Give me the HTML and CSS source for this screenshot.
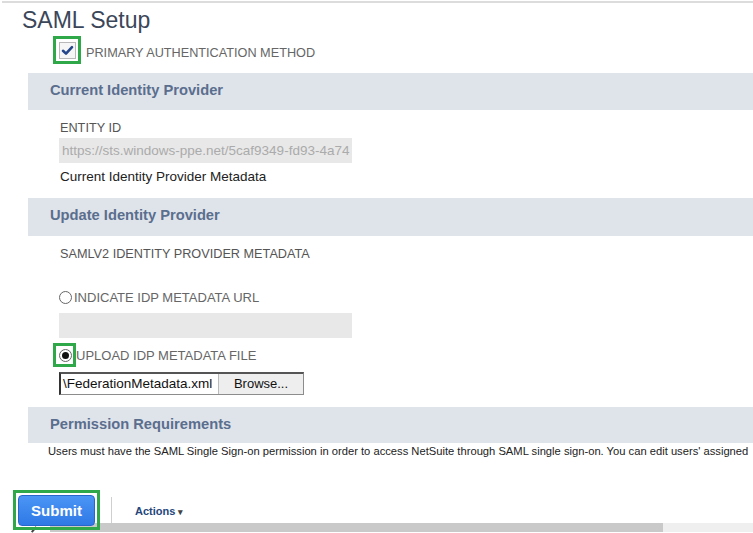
FILE: index.html
```html
<!DOCTYPE html>
<html>
<head>
<meta charset="utf-8">
<link rel="stylesheet" href="styles.css">
</head>
<body>
<div class="page">
  <div class="topline"></div>
  <h1 class="title">SAML Setup</h1>
  <div class="check-row">
    <span class="mark-wrap">
      <span class="checkbox">
        <svg width="13" height="11" viewBox="0 0 13 11"><path d="M2 5.8 L5 8.6 L11 2.2" fill="none" stroke="#24468a" stroke-width="2.6" stroke-linecap="round" stroke-linejoin="round"/></svg>
      </span>
      <span class="hl hl-check"></span>
    </span>
    <span class="check-label">PRIMARY AUTHENTICATION METHOD</span>
  </div>

  <div class="band band-1">Current Identity Provider</div>
  <div class="field">
    <div class="label row-entity">ENTITY ID</div>
    <div class="input ro">https://sts.windows-ppe.net/5caf9349-fd93-4a74</div>
    <div class="plain row-meta">Current Identity Provider Metadata</div>
  </div>

  <div class="band band-2">Update Identity Provider</div>
  <div class="field">
    <div class="label row-saml">SAMLV2 IDENTITY PROVIDER METADATA</div>
    <div class="radio-row row-url">
      <span class="radio"></span>
      <span class="label">INDICATE IDP METADATA URL</span>
    </div>
    <div class="input"></div>
    <div class="radio-row row-upload">
      <span class="mark-wrap">
        <span class="radio on"></span>
        <span class="hl hl-radio"></span>
      </span>
      <span class="label">UPLOAD IDP METADATA FILE</span>
    </div>
    <div class="file">
      <span class="file-name"><span class="file-text">\FederationMetadata.xml</span></span>
      <span class="browse">Browse...</span>
    </div>
  </div>

  <div class="band band-3">Permission Requirements</div>
  <div class="perm">Users must have the SAML Single Sign-on permission in order to access NetSuite through SAML single sign-on. You can edit users' assigned</div>

  <div class="footer">
    <span class="submit">Submit<span class="hl hl-submit"></span></span>
    <span class="sep"></span>
    <span class="actions">Actions <span class="caret">&#9662;</span></span>
  </div>
  <div class="bottom-bar">
    <span class="bb-left"><span class="tick"></span></span>
    <span class="bb-mid"></span>
    <span class="bb-right"></span>
  </div>
</div>
</body>
</html>
```

FILE: styles.css
```css
html, body {
  margin: 0;
  padding: 0;
  background: #ffffff;
}
body {
  font-family: "Liberation Sans", Arial, sans-serif;
  width: 753px;
  height: 533px;
  overflow: hidden;
}
.page {
  width: 753px;
}
.topline {
  height: 2px;
  margin-top: 1px;
  margin-left: 2px;
  background: #dcdcdc;
}
.title {
  margin: 4px 0 0 22px;
  font-weight: normal;
  font-size: 23px;
  line-height: 26px;
  height: 26px;
  color: #3b4759;
}
.check-row {
  display: flex;
  align-items: center;
  height: 26px;
  margin-top: 4px;
  padding-left: 59px;
}
.mark-wrap {
  position: relative;
  display: inline-flex;
}
.checkbox {
  width: 15px;
  height: 15px;
  border: 1px solid #b9b9b9;
  background: #f6f6f6;
  display: inline-flex;
  align-items: center;
  justify-content: center;
}
.hl {
  position: absolute;
  border: 3px solid #2fa84a;
  box-sizing: border-box;
  pointer-events: none;
}
.hl-check {
  left: -6px;
  top: -6px;
  width: 28px;
  height: 28px;
}
.check-label {
  margin-left: 10px;
  padding-top: 5px;
  font-size: 12.7px;
  color: #666666;
}
.band {
  margin-left: 28px;
  height: 37px;
  line-height: 35px;
  padding-left: 22px;
  background: #dfe3ea;
  font-size: 14.7px;
  font-weight: bold;
  color: #5a6e8e;
}
.band-1 {
  margin-top: 10px;
}
.band-2 {
  margin-top: 11px;
  height: 38px;
  line-height: 35px;
}
.band-3 {
  margin-top: 12px;
  height: 36px;
  line-height: 35px;
}
.field {
  padding-left: 59px;
}
.label {
  font-size: 12.7px;
  color: #555555;
}
.row-entity {
  margin-top: 8px;
  height: 20px;
  line-height: 20px;
  padding-left: 1px;
}
.input {
  width: 293px;
  height: 25px;
  line-height: 25px;
  background: #e8e8e8;
  font-size: 13.5px;
  color: #ababab;
  padding-left: 3px;
  box-sizing: border-box;
  white-space: nowrap;
  overflow: hidden;
}
.plain {
  font-size: 13.5px;
  color: #222222;
}
.row-meta {
  margin-top: 4px;
  height: 20px;
  line-height: 20px;
  padding-left: 1px;
}
.row-saml {
  margin-top: 8px;
  height: 20px;
  line-height: 20px;
  padding-left: 1px;
}
.radio-row {
  display: flex;
  align-items: center;
  height: 20px;
}
.row-url {
  margin-top: 23px;
  margin-bottom: 6px;
}
.row-url .label,
.row-upload .label {
  margin-left: 2px;
  font-size: 13px;
  color: #666666;
}
.radio {
  width: 11px;
  height: 11px;
  border: 1px solid #666666;
  border-radius: 50%;
  background: #ffffff;
  display: inline-flex;
  align-items: center;
  justify-content: center;
}
.radio.on::after {
  content: "";
  width: 7px;
  height: 7px;
  border-radius: 50%;
  background: #111111;
}
.row-upload {
  margin-top: 6px;
  height: 22px;
}
.row-upload .label {
  margin-left: 4px;
}
.hl-radio {
  left: -6px;
  top: -6px;
  width: 23px;
  height: 24px;
}
.file {
  margin-top: 6px;
  display: flex;
  width: 245px;
  height: 23px;
  box-sizing: border-box;
  border: 1px solid #8c8c8c;
  border-left: 2px solid #333333;
  border-top: 2px solid #555555;
}
.file-name {
  width: 157px;
  white-space: nowrap;
  display: flex;
  align-items: center;
  background: #ffffff;
  padding-left: 2px;
  box-sizing: border-box;
}
.file-text {
  font-size: 13.5px;
  line-height: 20px;
  color: #111111;
}
.browse {
  flex: 1;
  background: #eeeeee;
  border-left: 1px solid #bbbbbb;
  font-size: 13px;
  line-height: 20px;
  text-align: center;
  color: #111111;
}
.perm {
  margin-left: 48px;
  height: 16px;
  line-height: 16px;
  font-size: 11.2px;
  color: #222222;
  white-space: nowrap;
}
.footer {
  margin-top: 30px;
  height: 34px;
  display: flex;
  align-items: flex-start;
}
.submit {
  position: relative;
  z-index: 1;
  margin-top: 6px;
  margin-left: 18px;
  width: 77px;
  height: 31px;
  line-height: 29px;
  box-sizing: border-box;
  border: 1px solid #2867c9;
  border-radius: 4px;
  background: linear-gradient(#4a95f5, #2f79e6);
  color: #ffffff;
  font-size: 15px;
  font-weight: bold;
  text-align: center;
}
.hl-submit {
  left: -6px;
  top: -6px;
  width: 87px;
  height: 40px;
}
.sep {
  margin-left: 16px;
  margin-top: 8px;
  width: 1px;
  height: 26px;
  background: #cfcfcf;
}
.actions {
  margin-left: 23px;
  margin-top: 16px;
  font-size: 11px;
  font-weight: bold;
  color: #24477b;
}
.caret {
  font-size: 9px;
  color: #444444;
}
.bottom-bar {
  display: flex;
  height: 9px;
}
.bb-left {
  width: 50px;
  position: relative;
}
.tick {
  position: absolute;
  left: 33px;
  top: 3px;
  width: 2px;
  height: 7px;
  background: #444444;
  transform: rotate(40deg);
}
.bb-mid {
  width: 613px;
  background: #c9c9c9;
}
.bb-right {
  flex: 1;
  background: #efefef;
}
```
